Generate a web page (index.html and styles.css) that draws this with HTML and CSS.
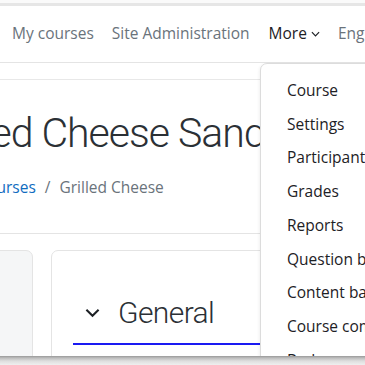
FILE: index.html
```html
<!DOCTYPE html>
<html>
<head>
<meta charset="utf-8">
<link rel="stylesheet" href="styles.css">
</head>
<body>
<div class="frame">
  <div class="topband"></div>
  <nav class="navbar">
    <a class="nav-link">My courses</a>
    <a class="nav-link">Site Administration</a>
    <a class="nav-link active">More <svg class="caret" viewBox="0 0 10 6" width="9" height="6"><path d="M1 1l4 4 4-4" fill="none" stroke="#1d2125" stroke-width="1.3"/></svg></a>
    <a class="nav-link">English</a>
  </nav>
  <div class="subnav"></div>
  <header class="page-header">
    <h1 class="title">Grilled Cheese Sandwich</h1>
    <div class="breadcrumb"><a class="crumb-link">My courses</a><span class="sep">/</span><span class="crumb">Grilled Cheese</span></div>
  </header>
  <div class="content">
    <aside class="drawer"></aside>
    <section class="card">
      <div class="section-head">
        <svg class="chev" viewBox="0 0 16 10" width="15" height="10"><path d="M1.5 1.5l6.5 6.5 6.5-6.5" fill="none" stroke="#1d2125" stroke-width="2.2"/></svg>
        <span class="section-title">General</span>
      </div>
      <div class="underline"></div>
    </section>
  </div>
  <ul class="dropdown">
    <li>Course</li>
    <li>Settings</li>
    <li>Participants</li>
    <li>Grades</li>
    <li>Reports</li>
    <li>Question bank</li>
    <li>Content bank</li>
    <li>Course completion</li>
    <li>Badges</li>
  </ul>
  <div class="bottom-shadow"></div>
</div>
</body>
</html>
```
FILE: styles.css
```css
html, body {
  margin: 0;
  padding: 0;
  background: #fff;
}
body {
  width: 365px;
  height: 365px;
  overflow: hidden;
  font-family: "Open Sans", "Noto Sans", sans-serif;
  color: #1d2125;
}
.frame {
  position: relative;
  width: 365px;
  height: 365px;
  overflow: hidden;
}
.topband {
  height: 3px;
  border-bottom: 3px solid #e6e6e6;
  background: #fafafa;
}
.navbar {
  height: 56px;
  border-bottom: 1px solid #e4e4e4;
  display: flex;
  align-items: center;
  padding-left: 12px;
  gap: 18px;
  white-space: nowrap;
}
.nav-link {
  font-size: 15.5px;
  color: #6a737b;
  display: flex;
  align-items: center;
  gap: 4px;
  margin-top: -2px;
}
.nav-link.active {
  color: #1d2125;
  margin-left: 1px;
}
.caret {
  margin-top: 2px;
}
.subnav {
  height: 16px;
  border-bottom: 1px solid #e8e8e8;
}
.page-header {
  padding-top: 28px;
}
.title {
  margin: 0;
  font-family: "Roboto", "Open Sans", sans-serif;
  font-size: 41px;
  font-weight: 300;
  letter-spacing: -1px;
  line-height: 51px;
  white-space: nowrap;
  text-indent: -74px;
  color: #2b3035;
}
.breadcrumb {
  margin-top: 16px;
  font-size: 15.5px;
  line-height: 25px;
  white-space: nowrap;
  margin-left: -46px;
  display: flex;
  gap: 9px;
  padding-bottom: 33px;
  border-bottom: 1px solid #e4e4e4;
}
.crumb-link {
  color: #0f6cbf;
}
.sep, .crumb {
  color: #6a737b;
}
.content {
  display: flex;
  gap: 18px;
  margin-top: 16px;
  margin-left: -40px;
}
.drawer {
  width: 71px;
  height: 140px;
  flex: none;
  background: #f5f6f7;
  border: 1px solid #e4e4e4;
  border-radius: 0 7px 0 0;
}
.card {
  flex: none;
  width: 400px;
  height: 140px;
  border: 1px solid #e4e4e4;
  border-radius: 7px 0 0 0;
  padding-left: 21px;
  box-sizing: border-box;
}
.section-head {
  display: flex;
  align-items: center;
  padding-top: 42px;
  height: 40px;
  padding-left: 12px;
  gap: 18px;
}
.section-title {
  font-family: "Roboto", "Open Sans", sans-serif;
  font-size: 30px;
  font-weight: 300;
  letter-spacing: -0.6px;
  line-height: 40px;
  color: #2b3035;
}
.underline {
  margin-top: 10px;
  height: 2px;
  background: #1a1af2;
}
.dropdown {
  position: absolute;
  left: 260px;
  top: 63px;
  width: 160px;
  margin: 0;
  padding: 10px 0 0 0;
  list-style: none;
  background: #fff;
  border: 1px solid #dcdcdc;
  border-radius: 7px 0 0 0;
  box-shadow: -1px 1px 3px rgba(0,0,0,0.06);
  height: 320px;
}
.dropdown li {
  font-size: 15.5px;
  line-height: 33.7px;
  padding-left: 26px;
  white-space: nowrap;
  color: #1d2125;
}
.bottom-shadow {
  position: absolute;
  left: 0;
  right: 0;
  top: 356px;
  height: 9px;
  background: linear-gradient(#999, #bdbdbd 2px, #dedede 5px, #efefef 9px);
}
```
